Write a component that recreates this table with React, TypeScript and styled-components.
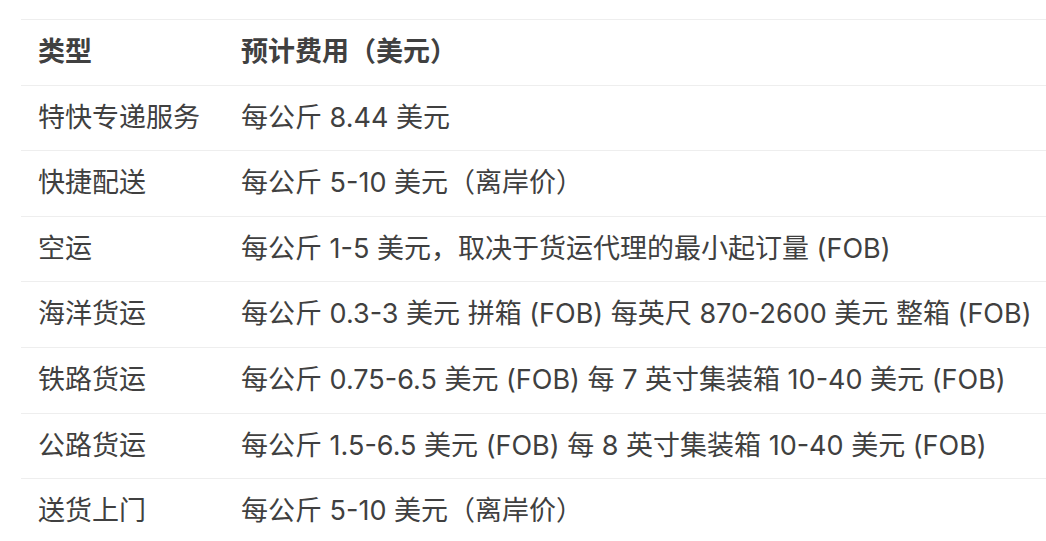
import React from "react";
import styled, { createGlobalStyle } from "styled-components";

const rows: [string, string][] = [
    ["特快专递服务", "每公斤 8.44 美元"],
    ["快捷配送", "每公斤 5-10 美元（离岸价）"],
    ["空运", "每公斤 1-5 美元，取决于货运代理的最小起订量 (FOB)"],
    ["海洋货运", "每公斤 0.3-3 美元 拼箱 (FOB) 每英尺 870-2600 美元 整箱 (FOB)"],
    ["铁路货运", "每公斤 0.75-6.5 美元 (FOB) 每 7 英寸集装箱 10-40 美元 (FOB)"],
    ["公路货运", "每公斤 1.5-6.5 美元 (FOB) 每 8 英寸集装箱 10-40 美元 (FOB)"],
    ["送货上门", "每公斤 5-10 美元（离岸价）"],
];

export default function App() {
    return (
        <Page>
            <GlobalStyle />
            <Table>
                <colgroup>
                    <TypeCol />
                    <col />
                </colgroup>
                <thead>
                    <tr>
                        <HeadCell>类型</HeadCell>
                        <HeadCell>预计费用（美元）</HeadCell>
                    </tr>
                </thead>
                <tbody>
                    {rows.map(([type, cost]) => (
                        <tr key={type}>
                            <Cell>{type}</Cell>
                            <Cell>{cost}</Cell>
                        </tr>
                    ))}
                </tbody>
            </Table>
        </Page>
    );
}

const GlobalStyle = createGlobalStyle`
    body {
        margin: 0;
        background: #fff;
        font-family: "Inter", "Noto Sans CJK SC", sans-serif;
        color: #404040;
    }
`;

const Page = styled.div`
    padding: 19px 0 0 21px;
    overflow: hidden;
`;

const Table = styled.table`
    border-collapse: collapse;
    table-layout: fixed;
    width: 1040px;
    white-space: nowrap;
    font-size: 27px;
`;

const TypeCol = styled.col`
    width: 203px;
`;

const HeadCell = styled.th`
    text-align: left;
    font-weight: 700;
    padding: 16px 17px;
    line-height: 32.6px;
    border-top: 1px solid #eeeeee;
    border-bottom: 1px solid #eeeeee;
`;

const Cell = styled.td`
    padding: 16px 17px;
    line-height: 32.6px;
    border-bottom: 1px solid #eeeeee;
`;
